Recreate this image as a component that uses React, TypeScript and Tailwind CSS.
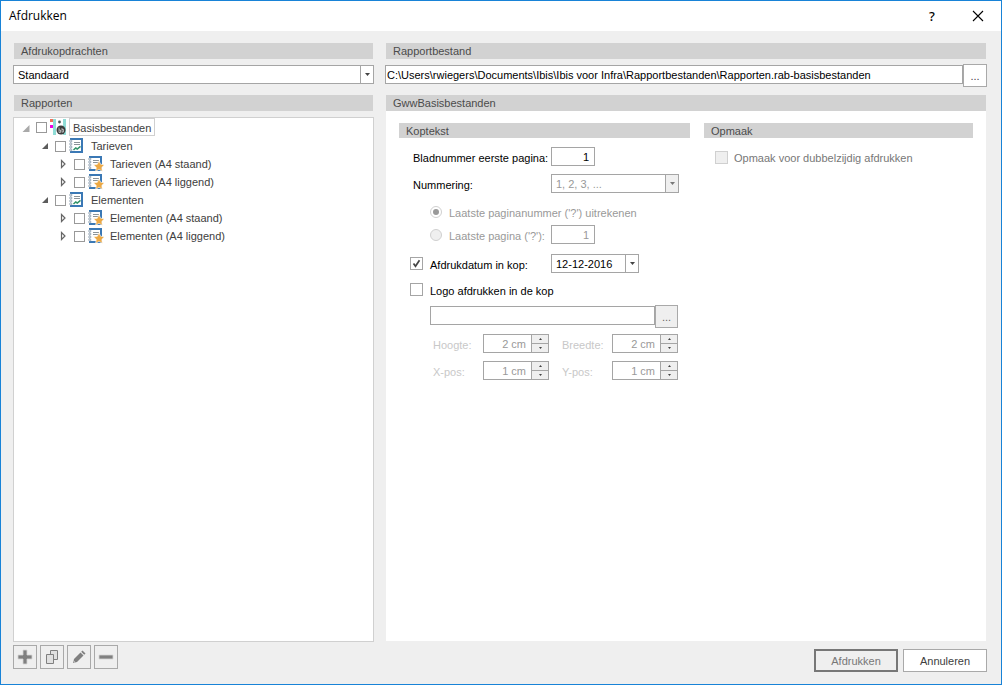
import { useState } from "react";
import type { ReactNode } from "react";

type NodeIcon = "root" | "group" | "report";

type TreeNode = {
  id: string;
  label: string;
  icon: NodeIcon;
  open?: boolean;
  children?: TreeNode[];
};

const reports: TreeNode = {
  id: "basis",
  label: "Basisbestanden",
  icon: "root",
  open: true,
  children: [
    {
      id: "tarieven",
      label: "Tarieven",
      icon: "group",
      open: true,
      children: [
        { id: "tarieven-staand", label: "Tarieven (A4 staand)", icon: "report" },
        { id: "tarieven-liggend", label: "Tarieven (A4 liggend)", icon: "report" },
      ],
    },
    {
      id: "elementen",
      label: "Elementen",
      icon: "group",
      open: true,
      children: [
        { id: "elementen-staand", label: "Elementen (A4 staand)", icon: "report" },
        { id: "elementen-liggend", label: "Elementen (A4 liggend)", icon: "report" },
      ],
    },
  ],
};

const RootIcon = () => (
  <svg width="16" height="16" viewBox="0 0 16 16" className="shrink-0">
    <rect x="0" y="0" width="3" height="3" fill="#f0705a" />
    <rect x="0" y="6" width="3" height="3" fill="#f000e0" />
    <rect x="3" y="0" width="3" height="16" fill="#8fdcd6" />
    <rect x="13" y="0" width="3" height="16" fill="#8fdcd6" />
    <circle cx="9.5" cy="3" r="1.4" fill="#4a5a5a" />
    <circle cx="11" cy="11" r="4.5" fill="#3c3c3c" />
    <path
      d="M9 8.5v5M9 11h1.5v2.5H9M12 9v4.5M12 10.5h1.5V13H12"
      stroke="#c8c8c8"
      strokeWidth="0.8"
      fill="none"
    />
  </svg>
);

const ReportIcon = ({ star }: { star?: boolean }) => (
  <svg width="16" height="16" viewBox="0 0 16 16" className="shrink-0">
    <path d="M1 0h13v15H1z" fill="#3a78b5" />
    <path d="M3 2h9v11H3z" fill="#fff" />
    <path d="M0 2h3v11H0z" fill="#fff" />
    {[3, 6, 9, 12].map((y) => (
      <circle key={y} cx="1.8" cy={y} r="1.1" fill="#fff" stroke="#7f93a6" strokeWidth="0.8" />
    ))}
    <path d="M5 4.5h6M5 6.5h6" stroke="#8c9499" strokeWidth="1" />
    {star ? (
      <path
        d="M11 4.8l1.7 3.5 3.8.5-2.8 2.7.7 3.8-3.4-1.9-3.4 1.9.7-3.8-2.8-2.7 3.8-.5z"
        fill="#eda944"
        stroke="#fff"
        strokeWidth="0.6"
      />
    ) : (
      <path d="M4.5 12l2.2-2 1.6 1 3.2-2.6" fill="none" stroke="#34946a" strokeWidth="1.5" />
    )}
  </svg>
);

const Expander = ({ open, faded }: { open?: boolean; faded?: boolean }) => (
  <svg width="11" height="12" viewBox="0 0 11 12" className="shrink-0">
    {open ? (
      <path d={faded ? "M8.5 4v7h-7z" : "M8 3v6H2z"} fill={faded ? "#a9a9a9" : "#5c5c5c"} />
    ) : (
      <path d="M2.5 2.5v7L6 6z" fill="#fff" stroke="#666" strokeWidth="1.2" />
    )}
  </svg>
);

const DownArrow = ({ light }: { light?: boolean }) => (
  <svg width="5" height="3" viewBox="0 0 5 3">
    <path d="M0 0h5L2.5 3z" fill={light ? "#777" : "#444"} />
  </svg>
);

const SectionTitle = ({ children }: { children: ReactNode }) => (
  <h2 className="mx-px h-4 bg-[#d2d2d2] pl-[7px] leading-4 text-[#4b4b4b]">{children}</h2>
);

const GroupTitle = ({ children }: { children: ReactNode }) => (
  <h3 className="h-[15px] bg-[#d2d2d2] pl-[7px] leading-4 text-[#4b4b4b]">{children}</h3>
);

const TreeItem = ({ node, level = 0 }: { node: TreeNode; level?: number }) => {
  const [open, setOpen] = useState(node.open ?? false);

  return (
    <li>
      <div className="flex h-[18px] items-center">
        <button
          type="button"
          aria-label={`${node.label} uitklappen`}
          className="mr-1"
          onClick={() => setOpen(!open)}
        >
          <Expander open={open} faded={level === 0} />
        </button>
        <input
          id={node.id}
          type="checkbox"
          className="mr-[3px] size-[11px] shrink-0 appearance-none border border-[#999] bg-white checked:bg-[#777]"
        />
        {node.icon === "root" ? <RootIcon /> : <ReportIcon star={node.icon === "report"} />}
        <label
          htmlFor={node.id}
          className={
            level === 0
              ? "ml-[3px] h-[18px] border border-[#d0d0d0] px-[3px] leading-[18px]"
              : "ml-[3px] px-[3px] leading-[18px]"
          }
        >
          {node.label}
        </label>
      </div>
      {open && node.children && (
        <ul className={level === 0 ? "pt-px pl-[19px]" : "pl-[19px]"}>
          {node.children.map((child) => (
            <TreeItem key={child.id} node={child} level={level + 1} />
          ))}
        </ul>
      )}
    </li>
  );
};

const Spinner = ({ id, label, value }: { id: string; label: string; value: string }) => (
  <>
    <label htmlFor={id} className="pt-1 text-[#c8c8c8]">
      {label}
    </label>
    <div className="flex h-[19px] w-[66px] border border-[#a5a5a5] bg-white">
      <input
        id={id}
        defaultValue={value}
        disabled
        className="w-0 flex-1 pr-[5px] text-right text-[#999]"
      />
      <div className="flex w-[17px] flex-col divide-y divide-[#a5a5a5] border-l border-[#a5a5a5] bg-[#efefef]">
        <button
          type="button"
          disabled
          aria-label={`${label} omhoog`}
          className="flex flex-1 items-center justify-center"
        >
          <svg width="3" height="2" viewBox="0 0 3 2">
            <path d="M0 2h3L1.5 0z" fill="#444" />
          </svg>
        </button>
        <button
          type="button"
          disabled
          aria-label={`${label} omlaag`}
          className="flex flex-1 items-center justify-center"
        >
          <svg width="3" height="2" viewBox="0 0 3 2">
            <path d="M0 0h3L1.5 2z" fill="#444" />
          </svg>
        </button>
      </div>
    </div>
  </>
);

const ToolButton = ({ label, children }: { label: string; children: ReactNode }) => (
  <button
    type="button"
    aria-label={label}
    className="flex size-6 items-center justify-center border border-[#a9a9a9] bg-[#efefef]"
  >
    <svg width="16" height="16" viewBox="0 0 16 16">
      {children}
    </svg>
  </button>
);

const Check = ({ id, checked, disabled }: { id: string; checked?: boolean; disabled?: boolean }) => (
  <span className="relative size-[13px] shrink-0">
    <input
      id={id}
      type="checkbox"
      defaultChecked={checked}
      disabled={disabled}
      className="peer block size-[13px] appearance-none border border-[#a5a5a5] bg-white disabled:border-[#d0d0d0] disabled:bg-[#efefef]"
    />
    <svg
      viewBox="0 0 13 13"
      className="pointer-events-none absolute inset-0 hidden size-[13px] peer-checked:block"
    >
      <path d="M3.5 6.5l2 2.8 4-6" fill="none" stroke="#444" strokeWidth="1.7" />
    </svg>
  </span>
);

const HeaderForm = () => (
  <div className="flex flex-col pt-[9px] text-black">
    <div className="flex pl-[14px]">
      <label htmlFor="first-page" className="w-[138px] pt-1 whitespace-nowrap">
        Bladnummer eerste pagina:
      </label>
      <input
        id="first-page"
        defaultValue="1"
        className="h-[19px] w-11 border border-[#a5a5a5] bg-white pr-[5px] text-right"
      />
    </div>

    <div className="mt-2 flex pl-[14px]">
      <label htmlFor="numbering" className="w-[138px] pt-1">
        Nummering:
      </label>
      <div className="relative h-[19px] w-32">
        <select
          id="numbering"
          disabled
          className="size-full appearance-none border border-[#a5a5a5] bg-white pl-1 text-[#999] opacity-100"
        >
          <option>1, 2, 3, ...</option>
        </select>
        <span className="pointer-events-none absolute inset-y-px right-px flex w-[13px] items-center justify-center border-l border-[#a5a5a5] bg-[#efefef]">
          <DownArrow light />
        </span>
      </div>
    </div>

    <div className="mt-[9px] flex h-[19px] items-center gap-[7px] pl-[31px]">
      <input
        id="calc-last"
        type="radio"
        name="last-page"
        defaultChecked
        disabled
        className="size-3 appearance-none rounded-full border border-[#d0d0d0] bg-[#999] bg-clip-content p-[2px]"
      />
      <label htmlFor="calc-last" className="pt-[2px] whitespace-nowrap text-[#999]">
        Laatste paginanummer ('?') uitrekenen
      </label>
    </div>

    <div className="mt-1 flex h-[19px] items-center gap-[7px] pl-[31px]">
      <input
        id="fixed-last"
        type="radio"
        name="last-page"
        disabled
        className="size-3 appearance-none rounded-full border border-[#d0d0d0] bg-[#efefef]"
      />
      <label htmlFor="fixed-last" className="w-[95px] pt-[2px] whitespace-nowrap text-[#999]">
        Laatste pagina ('?'):
      </label>
      <input
        aria-label="Laatste pagina"
        defaultValue="1"
        disabled
        className="h-[19px] w-11 border border-[#a5a5a5] bg-white pr-[5px] text-right text-[#999]"
      />
    </div>

    <div className="mt-[10px] flex h-[19px] items-center gap-[7px] pl-[11px]">
      <Check id="print-date" checked />
      <label htmlFor="print-date" className="w-[114px] pt-[2px] whitespace-nowrap">
        Afdrukdatum in kop:
      </label>
      <div className="flex h-[19px] w-[88px] border border-[#a5a5a5] bg-white">
        <input aria-label="Afdrukdatum" defaultValue="12-12-2016" className="w-0 flex-1 pl-1" />
        <button
          type="button"
          aria-label="Kalender"
          className="flex w-[13px] items-center justify-center border-l border-[#a5a5a5]"
        >
          <DownArrow />
        </button>
      </div>
    </div>

    <div className="mt-[7px] flex h-[19px] items-center gap-[7px] pl-[11px]">
      <Check id="print-logo" />
      <label htmlFor="print-logo" className="pt-[2px]">
        Logo afdrukken in de kop
      </label>
    </div>

    <div className="mt-[6px] flex items-start pr-3 pl-[31px]">
      <input
        aria-label="Logobestand"
        disabled
        className="mt-px h-[19px] w-0 flex-1 border border-[#a5a5a5] bg-white"
      />
      <button
        type="button"
        disabled
        className="h-[23px] w-[23px] border border-[#a9a9a9] bg-[#efefef] text-[#666]"
      >
        ...
      </button>
    </div>

    <div className="mt-[6px] grid grid-cols-[50px_66px_63px_66px] gap-y-2 pl-[34px]">
      <Spinner id="height" label="Hoogte:" value="2 cm" />
      <div className="contents [&>label]:pl-[13px]">
        <Spinner id="width" label="Breedte:" value="2 cm" />
      </div>
      <Spinner id="x-pos" label="X-pos:" value="1 cm" />
      <div className="contents [&>label]:pl-[13px]">
        <Spinner id="y-pos" label="Y-pos:" value="1 cm" />
      </div>
    </div>
  </div>
);

const App = () => {
  return (
    <main className="flex min-h-screen flex-col border border-[#1883d7] bg-[#efefef] font-['Liberation_Sans',Arial,sans-serif] text-[11px] leading-[14px] text-[#404040]">
      <header className="flex h-[30px] items-center bg-white pl-2 text-black">
        <h1 className="flex-1 font-['Open_Sans',sans-serif] text-[12px]">Afdrukken</h1>
        <button
          type="button"
          aria-label="Help"
          className="w-[46px] font-['Noto_Sans',sans-serif] text-[13px] font-medium"
        >
          ?
        </button>
        <button type="button" aria-label="Sluiten" className="flex w-[46px] justify-center">
          <svg width="12" height="12" viewBox="0 0 12 12">
            <path d="M1 1l10 10M11 1L1 11" stroke="#000" strokeWidth="1.1" />
          </svg>
        </button>
      </header>

      <div className="grid flex-1 grid-cols-[361fr_602fr] gap-x-[11px] pt-3 pr-[14px] pb-3 pl-3">
        <section className="flex flex-col">
          <SectionTitle>Afdrukopdrachten</SectionTitle>
          <div className="relative mt-[6px] h-[19px]">
            <select
              aria-label="Afdrukopdrachten"
              className="size-full appearance-none border border-[#a5a5a5] bg-white pl-1 text-black"
            >
              <option>Standaard</option>
            </select>
            <span className="pointer-events-none absolute inset-y-px right-px flex w-[13px] items-center justify-center border-l border-[#a5a5a5]">
              <DownArrow />
            </span>
          </div>
          <div className="mt-[11px]">
            <SectionTitle>Rapporten</SectionTitle>
          </div>
          <ul className="mt-[6px] flex-1 border border-[#d0d0d0] bg-white pl-[7px]">
            <TreeItem node={reports} />
          </ul>
          <div className="mt-[3px] mb-[3px] flex gap-[3px]">
            <ToolButton label="Toevoegen">
              <path d="M6 1h4v5h5v4h-5v5H6v-5H1V6h5z" fill="#808080" stroke="#d5d5d5" strokeWidth="0.8" />
            </ToolButton>
            <ToolButton label="Kopiëren">
              <path d="M6.5 1.5h7v9h-7z" fill="#e0e0e0" stroke="#808080" />
              <path d="M2.5 5.5h7v9h-7z" fill="#e0e0e0" stroke="#808080" />
            </ToolButton>
            <ToolButton label="Bewerken">
              <path d="M2 14l1-4 6.5-6.5 3 3L6 13z" fill="#808080" />
              <path d="M10.2 2.8l1.3-1.3 3 3-1.3 1.3z" fill="#808080" />
              <path d="M2.6 12l1.4 1.4" stroke="#efefef" strokeWidth="0.8" />
            </ToolButton>
            <ToolButton label="Verwijderen">
              <path d="M1 6h14v4H1z" fill="#808080" stroke="#d5d5d5" strokeWidth="0.8" />
            </ToolButton>
          </div>
        </section>

        <section className="flex flex-col">
          <SectionTitle>Rapportbestand</SectionTitle>
          <div className="mt-[5px] flex items-start">
            <input
              aria-label="Rapportbestand"
              defaultValue="C:\Users\rwiegers\Documents\Ibis\Ibis voor Infra\Rapportbestanden\Rapporten.rab-basisbestanden"
              className="mt-px h-[19px] w-0 flex-1 border border-[#a5a5a5] bg-white pl-px text-black"
            />
            <button
              type="button"
              className="h-[23px] w-6 border border-[#a9a9a9] bg-white text-[#444]"
            >
              ...
            </button>
          </div>
          <div className="mt-2">
            <SectionTitle>GwwBasisbestanden</SectionTitle>
          </div>
          <div className="mx-px grid flex-1 grid-cols-[290fr_268fr] gap-x-[14px] bg-white px-[13px] pt-3">
            <div>
              <GroupTitle>Koptekst</GroupTitle>
              <HeaderForm />
            </div>
            <div>
              <GroupTitle>Opmaak</GroupTitle>
              <div className="flex h-[38px] items-center gap-[6px] pl-[11px]">
                <Check id="duplex" disabled />
                <label htmlFor="duplex" className="pt-[2px] text-[#777]">
                  Opmaak voor dubbelzijdig afdrukken
                </label>
              </div>
            </div>
          </div>
          <div className="mt-2 flex justify-end gap-[5px]">
            <button
              type="button"
              className="h-[23px] w-[84px] border-2 border-[#777] bg-[#efefef] text-[#777]"
            >
              Afdrukken
            </button>
            <button type="button" className="h-[23px] w-[84px] border border-[#a9a9a9] bg-white">
              Annuleren
            </button>
          </div>
        </section>
      </div>
    </main>
  );
};

export default App;
